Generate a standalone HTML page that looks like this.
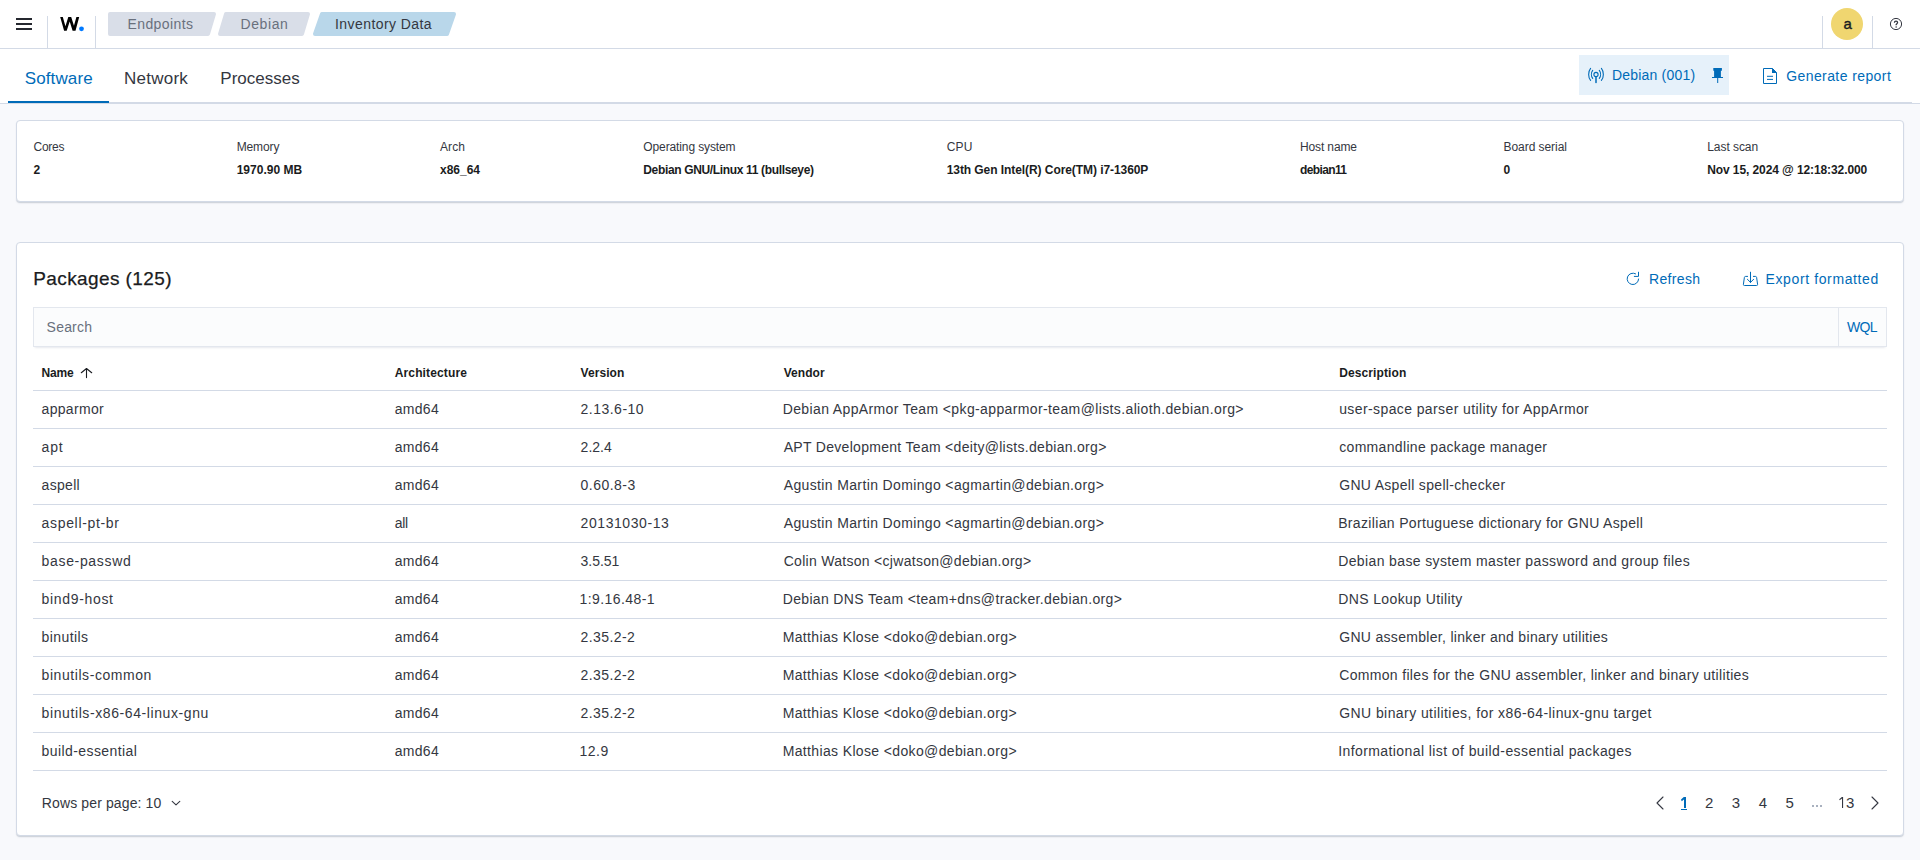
<!DOCTYPE html>
<html><head><meta charset="utf-8"><title>Inventory Data</title>
<style>
html,body{margin:0;padding:0}
body{width:1920px;height:860px;overflow:hidden;background:#f8f9fc;position:relative;font-family:"Liberation Sans",sans-serif;}
.t{position:absolute;white-space:pre;font-family:"Liberation Sans",sans-serif;}
.a{position:absolute;}
.hdr{left:0;top:0;width:1920px;height:48px;background:#fff;border-bottom:1px solid #d3dae6;}
.vdiv{position:absolute;width:1px;background:#d3dae6;}
.ph{left:0;top:49px;width:1920px;height:54px;background:#fff;border-bottom:1px solid #d3dae6;}
.tabs{left:8px;top:49px;width:1904px;height:54px;box-shadow:inset 0 -1px 0 #d3dae6;}
.panel{background:#fff;border:1px solid #d3dae6;border-radius:4px;box-sizing:border-box;box-shadow:0 1px 1px rgba(120,130,150,.22),0 2px 2px -1px rgba(152,162,179,.25);}
.hl{position:absolute;height:1px;background:#d3dae6;}
</style></head><body>
<div class="a hdr"></div>
<!-- hamburger -->
<div class="a" style="left:16px;top:18px;width:16px;height:2px;background:#25282f"></div>
<div class="a" style="left:16px;top:23px;width:16px;height:2px;background:#25282f"></div>
<div class="a" style="left:16px;top:28px;width:16px;height:2px;background:#25282f"></div>
<div class="vdiv" style="left:47px;top:16px;height:32px"></div>
<div class="vdiv" style="left:95px;top:16px;height:32px"></div>
<!-- logo -->
<svg class="a" style="left:56px;top:12px" width="36" height="24" viewBox="56 12 36 24">
<path d="M60.2 17 L62.8 17 L65.45 26.3 L68.3 17 L71.2 17 L73.96 25.8 L76.4 17 L79.2 17 L75.5 30.7 L72.6 30.7 L69.7 21.5 L66.7 30.7 L64.1 30.7 Z" fill="#000"/>
<circle cx="81.5" cy="28.8" r="2.4" fill="#0079ff"/>
</svg>
<!-- breadcrumbs -->
<svg class="a" style="left:100px;top:8px" width="370" height="32" viewBox="100 8 370 32">
<path d="M110 14 L214 14 L208 34 L110 34 Z" fill="#d9dee8" stroke="#d9dee8" stroke-width="4" stroke-linejoin="round"/>
<path d="M226 14 L308 14 L302 34 L220 34 Z" fill="#d9dee8" stroke="#d9dee8" stroke-width="4" stroke-linejoin="round"/>
<path d="M322 14 L454 14 L447 34 L315 34 Z" fill="#b9d7ea" stroke="#b9d7ea" stroke-width="4" stroke-linejoin="round"/>
</svg>
<div class="vdiv" style="left:1822px;top:16px;height:32px"></div>
<div class="a" style="left:1831px;top:8px;width:32px;height:32px;border-radius:50%;background:#f0d670"></div>
<div class="vdiv" style="left:1872px;top:16px;height:32px"></div>
<svg class="a" style="left:1888px;top:16px" width="16" height="16" viewBox="0 0 16 16">
<circle cx="8" cy="8" r="5.6" fill="none" stroke="#343741" stroke-width="1"/>
<path d="M6.4 6.8 C6.4 5.7 7.1 5.1 8 5.1 C9 5.1 9.6 5.7 9.6 6.5 C9.6 7.5 8.4 7.7 8.1 8.7 L8.1 9.3" fill="none" stroke="#343741" stroke-width="1.25"/>
<circle cx="8.1" cy="11" r=".75" fill="#343741"/>
</svg>

<!-- page header / tabs -->
<div class="a ph"></div>
<div class="a tabs"></div>
<div class="a" style="left:8px;top:101px;width:101px;height:2px;background:#006bb8"></div>
<div class="a" style="left:1579px;top:55px;width:150px;height:40px;background:#e6f1fa"></div>
<svg class="a" style="left:1582px;top:62px" width="28" height="26" viewBox="0 0 28 26">
<g fill="none" stroke="#006bb8" stroke-width="1.1" stroke-linecap="round">
<path d="M8.6 6.4 C6 9.6 6 15.2 8.6 18.4"/>
<path d="M10.7 8.4 C9 10.7 9 14.2 10.7 16.4"/>
<path d="M19.4 6.4 C22 9.6 22 15.2 19.4 18.4"/>
<path d="M17.3 8.4 C19 10.7 19 14.2 17.3 16.4"/>
<circle cx="14" cy="12.5" r="2.1"/>
<path d="M14 14.8 L14 20.5" stroke-width="1.5"/>
</g></svg>
<svg class="a" style="left:1704px;top:62px" width="28" height="26" viewBox="0 0 28 26">
<path d="M9.3 6 L17.9 6 L17.9 8.8 L16.9 8.8 L16.9 15 L19 15 L19 16 L14.2 16 L14.2 21 L13.2 21 L13.2 16 L8 16 L8 15 L10.1 15 L10.1 8.8 L9.3 8.8 Z" fill="#006bb8"/>
</svg>
<svg class="a" style="left:1756px;top:62px" width="28" height="28" viewBox="0 0 28 28">
<path d="M7.5 6.5 L16.5 6.5 L20.5 10.5 L20.5 21.5 L7.5 21.5 Z" fill="none" stroke="#006bb8" stroke-width="1" stroke-linejoin="round"/>
<path d="M16 6 L21 11 L16 11 Z" fill="#006bb8"/>
<path d="M11 14.3 L17 14.3 M11 17.4 L17 17.4" stroke="#006bb8" stroke-width="1"/>
</svg>

<!-- card 1 -->
<div class="a panel" style="left:16px;top:120px;width:1888px;height:82px"></div>
<!-- card 2 -->
<div class="a panel" style="left:16px;top:242px;width:1888px;height:594px"></div>
<svg class="a" style="left:1620px;top:265px" width="28" height="28" viewBox="0 0 28 28">
<g fill="none" stroke="#006bb8" stroke-width="1" stroke-linecap="round">
<path d="M15.6 8.8 A5.7 5.7 0 1 0 18.6 14"/>
<path d="M18.5 7.2 L18.5 11.4 L14.3 11.4"/>
</g></svg>
<svg class="a" style="left:1736px;top:265px" width="28" height="28" viewBox="0 0 28 28">
<g fill="none" stroke="#006bb8" stroke-width="1" stroke-linecap="round" stroke-linejoin="round">
<path d="M14.5 7.2 L14.5 17.4 M11.4 14.3 L14.5 17.4 L17.6 14.3"/>
<path d="M11.6 11.4 L9.6 11.4 Q8.6 11.4 8.4 12.4 L7.4 19.4 Q7.3 20.5 8.4 20.5 L20.6 20.5 Q21.7 20.5 21.6 19.4 L20.6 12.4 Q20.4 11.4 19.4 11.4 L17.4 11.4"/>
</g></svg>
<!-- search -->
<div class="a" style="left:33px;top:307px;width:1854px;height:40px;background:#fbfcfd;box-sizing:border-box;border:1px solid #e3e7ee;box-shadow:0 1px 1px -1px rgba(152,162,179,.2),0 3px 2px -2px rgba(152,162,179,.2)"></div>
<div class="vdiv" style="left:1838px;top:308px;height:38px;background:#e3e7ee"></div>
<!-- table lines -->
<div class="hl" style="left:33px;top:390px;width:1854px"></div>
<div class="hl" style="left:33px;top:428px;width:1854px"></div>
<div class="hl" style="left:33px;top:466px;width:1854px"></div>
<div class="hl" style="left:33px;top:504px;width:1854px"></div>
<div class="hl" style="left:33px;top:542px;width:1854px"></div>
<div class="hl" style="left:33px;top:580px;width:1854px"></div>
<div class="hl" style="left:33px;top:618px;width:1854px"></div>
<div class="hl" style="left:33px;top:656px;width:1854px"></div>
<div class="hl" style="left:33px;top:694px;width:1854px"></div>
<div class="hl" style="left:33px;top:732px;width:1854px"></div>
<div class="hl" style="left:33px;top:770px;width:1854px"></div>
<svg class="a" style="left:76px;top:360px" width="22" height="24" viewBox="0 0 22 24">
<g fill="none" stroke="#1a1c21" stroke-width="1.1" stroke-linecap="round" stroke-linejoin="round">
<path d="M10.5 8.6 L10.5 17.6 M5.3 12.7 L10.5 8.5 L15.7 12.7"/>
</g></svg>
<svg class="a" style="left:164px;top:792px" width="24" height="22" viewBox="0 0 24 22">
<path d="M8.2 9.3 L12 12.8 L15.8 9.3" fill="none" stroke="#343741" stroke-width="1.1" stroke-linecap="round" stroke-linejoin="round"/>
</svg>
<svg class="a" style="left:1650px;top:790px" width="20" height="24" viewBox="0 0 20 24">
<path d="M13 7 L7 13 L13 19" fill="none" stroke="#343741" stroke-width="1.1" stroke-linecap="round" stroke-linejoin="round"/>
</svg>
<svg class="a" style="left:1865px;top:790px" width="20" height="24" viewBox="0 0 20 24">
<path d="M7 7 L13 13 L7 19" fill="none" stroke="#343741" stroke-width="1.1" stroke-linecap="round" stroke-linejoin="round"/>
</svg>
<div class="a" style="left:1812px;top:805px;width:1.6px;height:1.6px;background:#a9b1bf"></div>
<div class="a" style="left:1816px;top:805px;width:1.6px;height:1.6px;background:#a9b1bf"></div>
<div class="a" style="left:1820px;top:805px;width:1.6px;height:1.6px;background:#a9b1bf"></div>
<div class="a" style="left:1681px;top:809px;width:6px;height:1px;background:#006bb8"></div>
<svg class="a" style="left:1676px;top:794px" width="180" height="18" viewBox="1676 794 180 18">
<path d="M1681 799.4 L1683.8 797 L1686 797 L1686 808 L1684 808 L1684 799.4 L1681.7 801.2 Z" fill="#006bb8"/>
<path d="M1839.2 799.3 L1841.9 797 L1843.1 797 L1843.1 808 L1842 808 L1842 798.6 L1839.7 800.2 Z" fill="#343741"/>
</svg>
<span class="t" style="left:127.50px;top:17px;font-size:14px;line-height:14px;color:#69707d;letter-spacing:0.404px;">Endpoints</span>
<span class="t" style="left:240.60px;top:17px;font-size:14px;line-height:14px;color:#69707d;letter-spacing:0.564px;">Debian</span>
<span class="t" style="left:335.00px;top:17px;font-size:14px;line-height:14px;color:#343741;letter-spacing:0.426px;">Inventory Data</span>
<span class="t" style="left:1843.60px;top:16px;font-size:15px;line-height:15px;color:#1a1c21;-webkit-text-stroke:0.4px #1a1c21;">a</span>
<span class="t" style="left:24.70px;top:70px;font-size:17px;line-height:17px;color:#006bb8;letter-spacing:0.124px;">Software</span>
<span class="t" style="left:124.00px;top:70px;font-size:17px;line-height:17px;color:#343741;letter-spacing:0.242px;">Network</span>
<span class="t" style="left:220.30px;top:70px;font-size:17px;line-height:17px;color:#343741;">Processes</span>
<span class="t" style="left:1612.00px;top:68px;font-size:14px;line-height:14px;color:#006bb8;letter-spacing:0.193px;">Debian (001)</span>
<span class="t" style="left:1786.20px;top:69px;font-size:14px;line-height:14px;color:#006bb8;letter-spacing:0.411px;">Generate report</span>
<span class="t" style="left:33.50px;top:141px;font-size:12px;line-height:12px;color:#343741;letter-spacing:-0.252px;">Cores</span>
<span class="t" style="left:33.50px;top:164px;font-size:12px;line-height:12px;color:#1a1c21;font-weight:700;">2</span>
<span class="t" style="left:236.70px;top:141px;font-size:12px;line-height:12px;color:#343741;letter-spacing:-0.127px;">Memory</span>
<span class="t" style="left:236.70px;top:164px;font-size:12px;line-height:12px;color:#1a1c21;font-weight:700;">1970.90 MB</span>
<span class="t" style="left:440.00px;top:141px;font-size:12px;line-height:12px;color:#343741;letter-spacing:0.100px;">Arch</span>
<span class="t" style="left:440.00px;top:164px;font-size:12px;line-height:12px;color:#1a1c21;font-weight:700;letter-spacing:-0.014px;">x86_64</span>
<span class="t" style="left:643.30px;top:141px;font-size:12px;line-height:12px;color:#343741;letter-spacing:-0.116px;">Operating system</span>
<span class="t" style="left:643.30px;top:164px;font-size:12px;line-height:12px;color:#1a1c21;font-weight:700;letter-spacing:-0.345px;">Debian GNU/Linux 11 (bullseye)</span>
<span class="t" style="left:946.70px;top:141px;font-size:12px;line-height:12px;color:#343741;letter-spacing:0.165px;">CPU</span>
<span class="t" style="left:946.70px;top:164px;font-size:12px;line-height:12px;color:#1a1c21;font-weight:700;letter-spacing:-0.069px;">13th Gen Intel(R) Core(TM) i7-1360P</span>
<span class="t" style="left:1300.00px;top:141px;font-size:12px;line-height:12px;color:#343741;letter-spacing:-0.131px;">Host name</span>
<span class="t" style="left:1300.00px;top:164px;font-size:12px;line-height:12px;color:#1a1c21;font-weight:700;letter-spacing:-0.626px;">debian11</span>
<span class="t" style="left:1503.50px;top:141px;font-size:12px;line-height:12px;color:#343741;letter-spacing:-0.051px;">Board serial</span>
<span class="t" style="left:1503.50px;top:164px;font-size:12px;line-height:12px;color:#1a1c21;font-weight:700;">0</span>
<span class="t" style="left:1707.20px;top:141px;font-size:12px;line-height:12px;color:#343741;letter-spacing:-0.049px;">Last scan</span>
<span class="t" style="left:1707.20px;top:164px;font-size:12px;line-height:12px;color:#1a1c21;font-weight:700;letter-spacing:-0.092px;">Nov 15, 2024 @ 12:18:32.000</span>
<span class="t" style="left:33.20px;top:269px;font-size:19px;line-height:19px;color:#1a1c21;letter-spacing:0.404px;-webkit-text-stroke:0.25px #1a1c21;">Packages (125)</span>
<span class="t" style="left:1649.00px;top:272px;font-size:14px;line-height:14px;color:#006bb8;letter-spacing:0.344px;">Refresh</span>
<span class="t" style="left:1765.50px;top:272px;font-size:14px;line-height:14px;color:#006bb8;letter-spacing:0.620px;">Export formatted</span>
<span class="t" style="left:46.60px;top:320px;font-size:14px;line-height:14px;color:#69707d;letter-spacing:0.206px;">Search</span>
<span class="t" style="left:1847.00px;top:320px;font-size:14px;line-height:14px;color:#006bb8;letter-spacing:-0.702px;">WQL</span>
<span class="t" style="left:41.60px;top:367px;font-size:12px;line-height:12px;color:#1a1c21;font-weight:700;letter-spacing:-0.170px;">Name</span>
<span class="t" style="left:394.70px;top:367px;font-size:12px;line-height:12px;color:#1a1c21;font-weight:700;letter-spacing:0.144px;">Architecture</span>
<span class="t" style="left:580.60px;top:367px;font-size:12px;line-height:12px;color:#1a1c21;font-weight:700;letter-spacing:0.046px;">Version</span>
<span class="t" style="left:783.70px;top:367px;font-size:12px;line-height:12px;color:#1a1c21;font-weight:700;letter-spacing:0.039px;">Vendor</span>
<span class="t" style="left:1339.20px;top:367px;font-size:12px;line-height:12px;color:#1a1c21;font-weight:700;letter-spacing:0.102px;">Description</span>
<span class="t" style="left:41.60px;top:402px;font-size:14px;line-height:14px;color:#343741;letter-spacing:0.306px;">apparmor</span>
<span class="t" style="left:394.70px;top:402px;font-size:14px;line-height:14px;color:#343741;letter-spacing:0.295px;">amd64</span>
<span class="t" style="left:580.60px;top:402px;font-size:14px;line-height:14px;color:#343741;letter-spacing:0.478px;">2.13.6-10</span>
<span class="t" style="left:782.70px;top:402px;font-size:14px;line-height:14px;color:#343741;letter-spacing:0.374px;">Debian AppArmor Team &lt;pkg-apparmor-team@lists.alioth.debian.org&gt;</span>
<span class="t" style="left:1339.20px;top:402px;font-size:14px;line-height:14px;color:#343741;letter-spacing:0.395px;">user-space parser utility for AppArmor</span>
<span class="t" style="left:41.60px;top:440px;font-size:14px;line-height:14px;color:#343741;letter-spacing:0.814px;">apt</span>
<span class="t" style="left:394.70px;top:440px;font-size:14px;line-height:14px;color:#343741;letter-spacing:0.295px;">amd64</span>
<span class="t" style="left:580.60px;top:440px;font-size:14px;line-height:14px;color:#343741;letter-spacing:0.012px;">2.2.4</span>
<span class="t" style="left:783.70px;top:440px;font-size:14px;line-height:14px;color:#343741;letter-spacing:0.301px;">APT Development Team &lt;deity@lists.debian.org&gt;</span>
<span class="t" style="left:1339.20px;top:440px;font-size:14px;line-height:14px;color:#343741;letter-spacing:0.328px;">commandline package manager</span>
<span class="t" style="left:41.60px;top:478px;font-size:14px;line-height:14px;color:#343741;letter-spacing:0.306px;">aspell</span>
<span class="t" style="left:394.70px;top:478px;font-size:14px;line-height:14px;color:#343741;letter-spacing:0.295px;">amd64</span>
<span class="t" style="left:580.60px;top:478px;font-size:14px;line-height:14px;color:#343741;letter-spacing:0.459px;">0.60.8-3</span>
<span class="t" style="left:783.70px;top:478px;font-size:14px;line-height:14px;color:#343741;letter-spacing:0.365px;">Agustin Martin Domingo &lt;agmartin@debian.org&gt;</span>
<span class="t" style="left:1339.20px;top:478px;font-size:14px;line-height:14px;color:#343741;letter-spacing:0.312px;">GNU Aspell spell-checker</span>
<span class="t" style="left:41.60px;top:516px;font-size:14px;line-height:14px;color:#343741;letter-spacing:0.667px;">aspell-pt-br</span>
<span class="t" style="left:394.70px;top:516px;font-size:14px;line-height:14px;color:#343741;letter-spacing:-0.298px;">all</span>
<span class="t" style="left:580.60px;top:516px;font-size:14px;line-height:14px;color:#343741;letter-spacing:0.566px;">20131030-13</span>
<span class="t" style="left:783.70px;top:516px;font-size:14px;line-height:14px;color:#343741;letter-spacing:0.365px;">Agustin Martin Domingo &lt;agmartin@debian.org&gt;</span>
<span class="t" style="left:1338.20px;top:516px;font-size:14px;line-height:14px;color:#343741;letter-spacing:0.339px;">Brazilian Portuguese dictionary for GNU Aspell</span>
<span class="t" style="left:41.60px;top:554px;font-size:14px;line-height:14px;color:#343741;letter-spacing:0.660px;">base-passwd</span>
<span class="t" style="left:394.70px;top:554px;font-size:14px;line-height:14px;color:#343741;letter-spacing:0.295px;">amd64</span>
<span class="t" style="left:580.60px;top:554px;font-size:14px;line-height:14px;color:#343741;letter-spacing:-0.048px;">3.5.51</span>
<span class="t" style="left:783.70px;top:554px;font-size:14px;line-height:14px;color:#343741;letter-spacing:0.290px;">Colin Watson &lt;cjwatson@debian.org&gt;</span>
<span class="t" style="left:1338.20px;top:554px;font-size:14px;line-height:14px;color:#343741;letter-spacing:0.376px;">Debian base system master password and group files</span>
<span class="t" style="left:41.60px;top:592px;font-size:14px;line-height:14px;color:#343741;letter-spacing:0.668px;">bind9-host</span>
<span class="t" style="left:394.70px;top:592px;font-size:14px;line-height:14px;color:#343741;letter-spacing:0.295px;">amd64</span>
<span class="t" style="left:579.60px;top:592px;font-size:14px;line-height:14px;color:#343741;letter-spacing:0.415px;">1:9.16.48-1</span>
<span class="t" style="left:782.70px;top:592px;font-size:14px;line-height:14px;color:#343741;letter-spacing:0.342px;">Debian DNS Team &lt;team+dns@tracker.debian.org&gt;</span>
<span class="t" style="left:1338.20px;top:592px;font-size:14px;line-height:14px;color:#343741;letter-spacing:0.389px;">DNS Lookup Utility</span>
<span class="t" style="left:41.60px;top:630px;font-size:14px;line-height:14px;color:#343741;letter-spacing:0.403px;">binutils</span>
<span class="t" style="left:394.70px;top:630px;font-size:14px;line-height:14px;color:#343741;letter-spacing:0.295px;">amd64</span>
<span class="t" style="left:580.60px;top:630px;font-size:14px;line-height:14px;color:#343741;letter-spacing:0.402px;">2.35.2-2</span>
<span class="t" style="left:782.70px;top:630px;font-size:14px;line-height:14px;color:#343741;letter-spacing:0.357px;">Matthias Klose &lt;doko@debian.org&gt;</span>
<span class="t" style="left:1339.20px;top:630px;font-size:14px;line-height:14px;color:#343741;letter-spacing:0.308px;">GNU assembler, linker and binary utilities</span>
<span class="t" style="left:41.60px;top:668px;font-size:14px;line-height:14px;color:#343741;letter-spacing:0.562px;">binutils-common</span>
<span class="t" style="left:394.70px;top:668px;font-size:14px;line-height:14px;color:#343741;letter-spacing:0.295px;">amd64</span>
<span class="t" style="left:580.60px;top:668px;font-size:14px;line-height:14px;color:#343741;letter-spacing:0.402px;">2.35.2-2</span>
<span class="t" style="left:782.70px;top:668px;font-size:14px;line-height:14px;color:#343741;letter-spacing:0.357px;">Matthias Klose &lt;doko@debian.org&gt;</span>
<span class="t" style="left:1339.20px;top:668px;font-size:14px;line-height:14px;color:#343741;letter-spacing:0.330px;">Common files for the GNU assembler, linker and binary utilities</span>
<span class="t" style="left:41.60px;top:706px;font-size:14px;line-height:14px;color:#343741;letter-spacing:0.594px;">binutils-x86-64-linux-gnu</span>
<span class="t" style="left:394.70px;top:706px;font-size:14px;line-height:14px;color:#343741;letter-spacing:0.295px;">amd64</span>
<span class="t" style="left:580.60px;top:706px;font-size:14px;line-height:14px;color:#343741;letter-spacing:0.402px;">2.35.2-2</span>
<span class="t" style="left:782.70px;top:706px;font-size:14px;line-height:14px;color:#343741;letter-spacing:0.357px;">Matthias Klose &lt;doko@debian.org&gt;</span>
<span class="t" style="left:1339.20px;top:706px;font-size:14px;line-height:14px;color:#343741;letter-spacing:0.427px;">GNU binary utilities, for x86-64-linux-gnu target</span>
<span class="t" style="left:41.60px;top:744px;font-size:14px;line-height:14px;color:#343741;letter-spacing:0.415px;">build-essential</span>
<span class="t" style="left:394.70px;top:744px;font-size:14px;line-height:14px;color:#343741;letter-spacing:0.295px;">amd64</span>
<span class="t" style="left:579.60px;top:744px;font-size:14px;line-height:14px;color:#343741;letter-spacing:0.446px;">12.9</span>
<span class="t" style="left:782.70px;top:744px;font-size:14px;line-height:14px;color:#343741;letter-spacing:0.357px;">Matthias Klose &lt;doko@debian.org&gt;</span>
<span class="t" style="left:1338.20px;top:744px;font-size:14px;line-height:14px;color:#343741;letter-spacing:0.413px;">Informational list of build-essential packages</span>
<span class="t" style="left:41.80px;top:796px;font-size:14px;line-height:14px;color:#343741;letter-spacing:0.123px;">Rows per page: 10</span>
<span class="t" style="left:1705.00px;top:795px;font-size:15px;line-height:15px;color:#343741;">2</span>
<span class="t" style="left:1731.70px;top:795px;font-size:15px;line-height:15px;color:#343741;">3</span>
<span class="t" style="left:1758.75px;top:795px;font-size:15px;line-height:15px;color:#343741;">4</span>
<span class="t" style="left:1785.60px;top:795px;font-size:15px;line-height:15px;color:#343741;">5</span>
<span class="t" style="left:1846.00px;top:795px;font-size:15px;line-height:15px;color:#343741;">3</span>
</body></html>
